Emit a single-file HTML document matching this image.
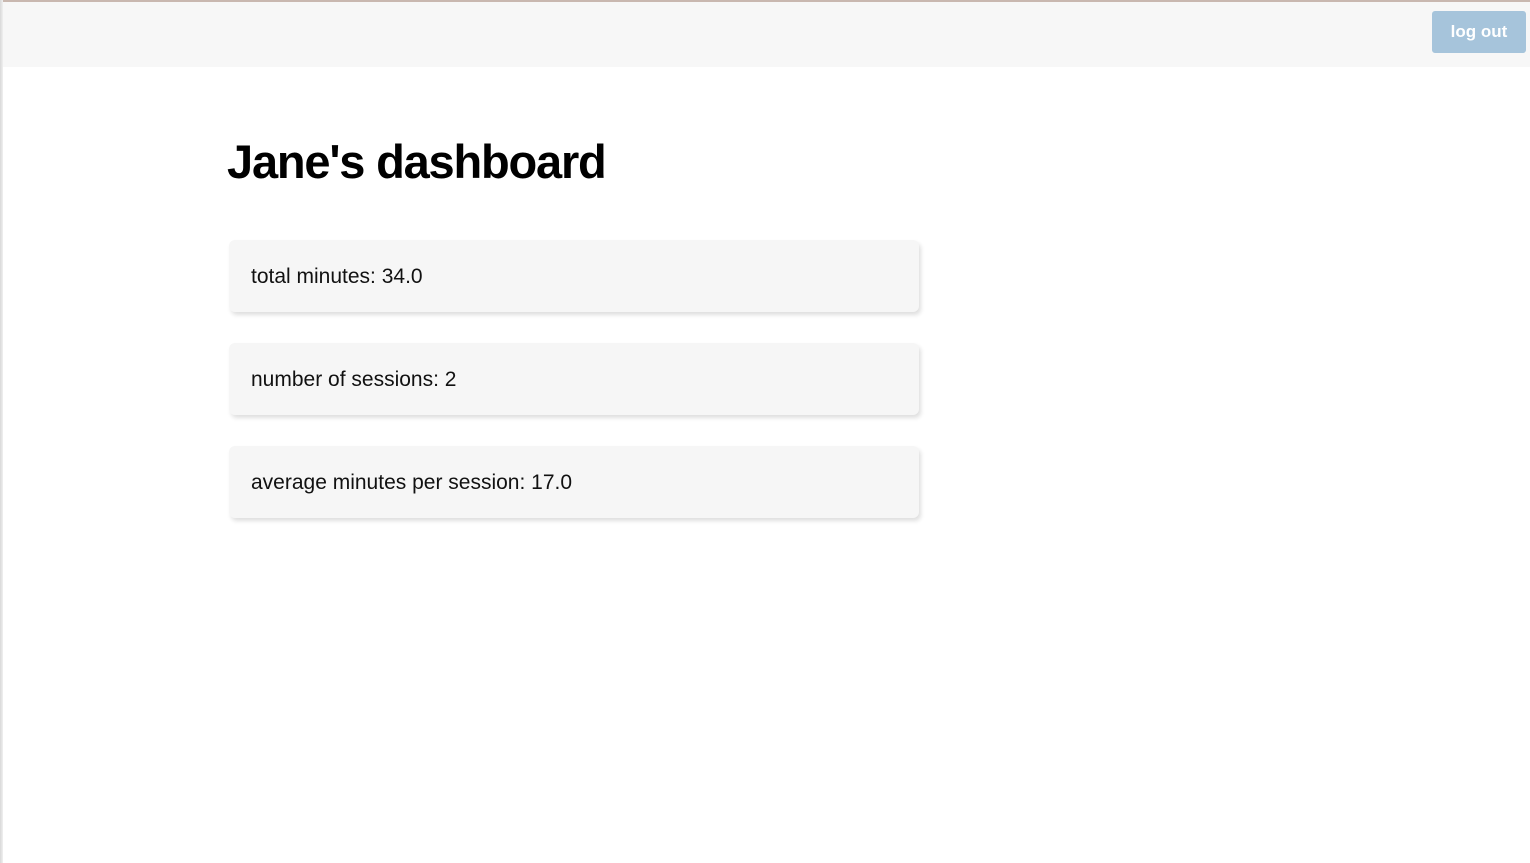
<!DOCTYPE html>
<html><head><meta charset="utf-8"><style>
html,body{margin:0;padding:0;width:1530px;height:863px;overflow:hidden;background:#fff;font-family:"Liberation Sans",sans-serif;}
.top{position:absolute;left:0;top:0;width:1530px;height:2px;background:#c9b8b0;}
.left{position:absolute;left:0;top:0;width:3px;height:863px;background:linear-gradient(to right,#d8d8d8,#f0f0f0);}
.nav{position:absolute;left:3px;top:2px;width:1527px;height:65px;background:#f7f7f7;}
.btn{position:absolute;left:1432px;top:11px;width:94px;height:42px;background:#a6c4db;border-radius:3px;color:#fff;font-size:17px;font-weight:bold;line-height:42px;text-align:center;}
h1{position:absolute;left:227px;top:133px;margin:0;font-size:47px;font-weight:bold;color:#000;letter-spacing:-1.2px;line-height:58px;}
.card{position:absolute;left:229px;width:690px;height:72px;background:#f6f6f6;border-radius:6px;box-shadow:2px 3px 4px rgba(0,0,0,0.13);font-size:21px;color:#111;line-height:74px;padding-left:22px;box-sizing:border-box;}
</style></head><body>
<div class="nav"></div><div class="top"></div><div class="left"></div>
<div class="btn">log out</div>
<h1>Jane's dashboard</h1>
<div class="card" style="top:240px">total minutes: 34.0</div>
<div class="card" style="top:343px">number of sessions: 2</div>
<div class="card" style="top:446px">average minutes per session: 17.0</div>
</body></html>
